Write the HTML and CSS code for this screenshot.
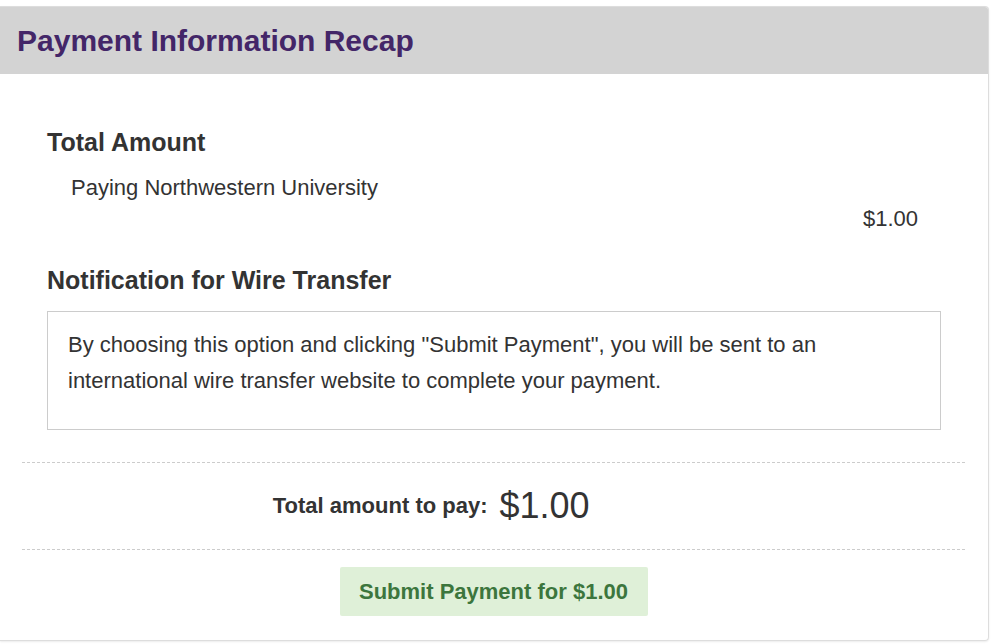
FILE: index.html
```html
<!DOCTYPE html>
<html>

<head>
    <title>Payment Information Recap</title>
    <link rel="stylesheet" href="styles.css">
</head>

<body>
    <div class="panel">
        <div class="panel-heading">
            <h2>Payment Information Recap</h2>
        </div>
        <div class="panel-body">
            <div class="section">
                <h3>Total Amount</h3>
                <div class="payee">Paying Northwestern University</div>
                <div class="amount">$1.00</div>
            </div>
            <div class="section">
                <h3 class="notice-title">Notification for Wire Transfer</h3>
                <div class="notice">
                    By choosing this option and clicking "Submit Payment", you will be sent to an
                    international wire transfer website to complete your payment.
                </div>
            </div>
            <div class="total">
                <span class="total-label">Total amount to pay:</span>
                <span class="total-value">$1.00</span>
            </div>
            <div class="actions">
                <button class="submit">Submit Payment for $1.00</button>
            </div>
        </div>
    </div>
</body>

</html>
```

FILE: styles.css
```css
body {
    font-family: "Liberation Sans", Arial, sans-serif;
    background-color: #fff;
    color: #333;
    margin: 0;
    padding: 6px 3px 3px 0;
}

.panel {
    border: 1px solid #ddd;
    border-left: none;
    border-radius: 0 4px 4px 0;
    box-shadow: 0 1px 2px rgba(0, 0, 0, 0.08);
    height: 635px;
    box-sizing: border-box;
}

.panel-heading {
    background-color: #d3d3d3;
    height: 67px;
    padding: 0 17px;
    display: flex;
    align-items: center;
    border-radius: 0 3px 0 0;
}

.panel-heading h2 {
    margin: 0;
    font-size: 30px;
    color: #432668;
}

.panel-body {
    padding: 53px 23px 0 22px;
}

.section {
    padding: 0 24px 0 25px;
}

h3 {
    margin: 0;
    font-size: 25px;
    line-height: 30px;
    color: #333;
}

.payee {
    font-size: 22px;
    line-height: 26px;
    padding: 18px 0 0 24px;
}

.amount {
    font-size: 22px;
    line-height: 26px;
    text-align: right;
    padding: 5px 23px 0 0;
}

.notice-title {
    margin-top: 33px;
}

.notice {
    border: 1px solid #ccc;
    margin-top: 16px;
    padding: 15px 20px 30px 20px;
    font-size: 22px;
    line-height: 36px;
}

.total {
    margin-top: 32px;
    border-top: 1px dashed #ccc;
    border-bottom: 1px dashed #ccc;
    height: 86px;
    display: grid;
    grid-template-columns: 1fr 1fr;
    column-gap: 12px;
    align-items: center;
}

.total-label {
    font-weight: bold;
    font-size: 22px;
    text-align: right;
}

.total-value {
    font-size: 36px;
}

.actions {
    text-align: center;
    padding-top: 17px;
}

.submit {
    font-family: inherit;
    background-color: #dff0d8;
    color: #3c763d;
    border: none;
    border-radius: 2px;
    font-size: 22px;
    font-weight: bold;
    width: 308px;
    height: 49px;
    cursor: pointer;
}
```
